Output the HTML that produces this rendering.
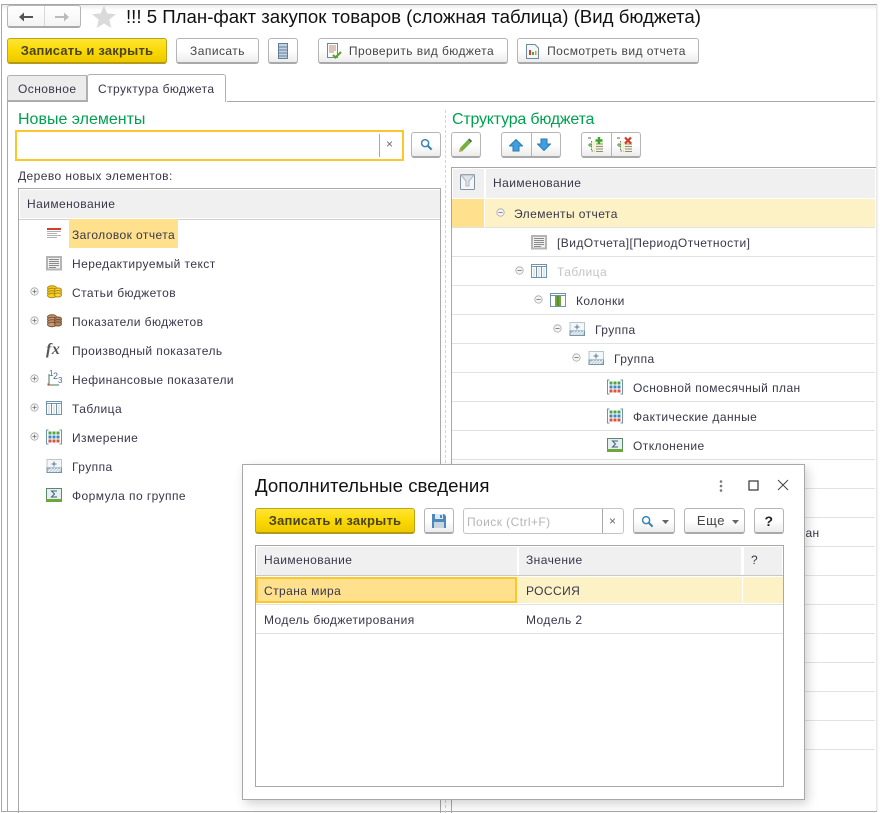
<!DOCTYPE html>
<html><head><meta charset="utf-8">
<style>
html,body{margin:0;padding:0;background:#fff}
#p{position:relative;width:880px;height:813px;overflow:hidden;background:#fff;font-family:"Liberation Sans",Arial,sans-serif;font-size:12px;color:#37374a}
#p div,#p svg{position:absolute}
.t{white-space:nowrap;line-height:16px;letter-spacing:.43px}
.b{box-sizing:border-box;border:1px solid #b5b5b5;border-bottom:2px solid #a9a9a9;border-radius:3px;background:linear-gradient(#fff,#fff 50%,#ececec);text-align:center;line-height:24px;white-space:nowrap;letter-spacing:.45px;color:#444}
.y{background:linear-gradient(#ffe534,#f9d800 55%,#efc800);border:1px solid #bda419;border-bottom:2px solid #b39a14;font-weight:bold;font-size:13px;color:#4b4420;letter-spacing:.2px}
.l{background:#e2e2e2;height:1px}
.h{background:#f0f0f0}
.v{background:#a8a8a8;width:1px}
</style></head><body><div id="p">
<svg width="0" height="0" style="position:absolute">
<defs>
<symbol id="minus" viewBox="0 0 11 11"><circle cx="5.5" cy="5.5" r="4.5" fill="#f4f4f4" stroke="#a9a9a9"/><path d="M3 5.5h5" stroke="#707070"/></symbol>
<symbol id="plus" viewBox="0 0 11 11"><circle cx="5.5" cy="5.5" r="4.5" fill="#f4f4f4" stroke="#a9a9a9"/><path d="M3 5.5h5M5.5 3v5" stroke="#707070"/></symbol>
<symbol id="text" viewBox="0 0 16 16"><rect x="1" y="2" width="14" height="12.500" fill="#efefef" stroke="#b4b4b4" stroke-width="2"/><path d="M3 4.500h10M3 6.500h10M3 8.500h10M3 10.500h10M3 12.500h7" stroke="#8a8a8a"/></symbol>
<symbol id="table" viewBox="0 0 16 16"><rect x=".5" y="1.500" width="15" height="13" fill="#fff" stroke="#6f93ad"/><path d="M.5 3.500h15M5.500 3v11M10.500 3v11" stroke="#6f93ad"/><path d="M2 5h2v9H2zM7 5h2v9H7zM12 5h2v9h-2z" fill="#dfe9f0"/></symbol>
<symbol id="cols" viewBox="0 0 16 16"><rect x=".5" y="1.500" width="15" height="13" fill="#fff" stroke="#6f93ad"/><path d="M.5 3.500h15" stroke="#6f93ad"/><rect x="5" y="4" width="6" height="10" fill="#6fa53a"/><path d="M8 4v10" stroke="#3f7a22"/></symbol>
<symbol id="group" viewBox="0 0 16 16"><rect x="1" y="1.500" width="14.500" height="13" fill="#f4f6f8" stroke="#b9c4cc"/><path d="M5.500 6h5M8 3.500v5" stroke="#4f7d9c"/><rect x="1" y="10" width="14.500" height="4.500" fill="#c6d0d8" stroke="#6f93ad"/><path d="M2 14l4-4M5 14l4-4M8 14l4-4M11 14l4-4" stroke="#fff" stroke-width=".8"/></symbol>
<symbol id="sigma" viewBox="0 0 16 16"><rect x=".5" y="1.500" width="15" height="13" fill="#e6eef2" stroke="#5b8a6a"/><rect x="0" y="12" width="16" height="3" fill="#6aa83a"/><path d="M11 4H5.500l3 3-3 3H11" fill="none" stroke="#3f5f7a"/></symbol>
<symbol id="grid" viewBox="0 0 16 16"><path d="M2.500 1H.5v14h2M13.500 1h2v14h-2" fill="none" stroke="#6f93ad"/><path d="M2.500 2.500h3v3h-3zM6.500 2.500h3v3h-3zM10.500 2.500h3v3h-3z" fill="#4fa64a"/><path d="M2.500 6.500h3v3h-3zM6.500 6.500h3v3h-3zM10.500 6.500h3v3h-3z" fill="#3f86c4"/><path d="M2.500 10.500h3v3h-3zM6.500 10.500h3v3h-3zM10.500 10.500h3v3h-3z" fill="#d9543c"/></symbol>
<symbol id="loupe" viewBox="0 0 14 14"><circle cx="5.500" cy="5.500" r="3.800" fill="#fff" stroke="#3a82b5" stroke-width="1.600"/><path d="M8.500 8.500l4 4" stroke="#3a82b5" stroke-width="2.200"/></symbol>
<symbol id="tree" viewBox="0 0 18 18"><rect x="5" y="5" width="11" height="12" fill="#f5f2dc"/><path d="M9 8h7M9 10.500h7M9 13h7M9 15.500h7" stroke="#8f8f80"/><path d="M1 2h3" stroke="#666"/><path d="M4.500 5v10h3" stroke="#6a7a6a" fill="none" stroke-dasharray="1.500 1"/><path d="M1 9h4M3 7v4" stroke="#4f9a3a"/></symbol>
</defs></svg>

<!-- window frame -->
<div style="left:1px;top:4px;width:874px;height:806px;border:1px solid #a8a8a8;box-shadow:inset 0 6px 6px -5px #ddd"></div>
<div style="left:876px;top:5px;width:3px;height:806px;background:linear-gradient(90deg,#e4e4e4,#fff)"></div>

<!-- nav -->
<div class="b" style="left:7px;top:5px;width:74px;height:23px;background:linear-gradient(#fff,#f4f4f4)"></div>
<div class="v" style="left:44px;top:6px;height:20px;background:#d8d8d8"></div>
<svg style="left:19px;top:12px" width="15" height="10" viewBox="0 0 15 10"><path d="M0 5l5-4.500V4h9v2H5v3.500z" fill="#555"/></svg>
<svg style="left:55px;top:12px" width="15" height="10" viewBox="0 0 15 10"><path d="M14 5L9 .5V4H0v2h9v3.500z" fill="#bbb"/></svg>
<svg style="left:92px;top:5px" width="24" height="23" viewBox="0 0 25 23"><path d="M12.500 0l3.400 8.300 9 .7-6.900 5.800 2.200 8.700-7.700-4.700-7.700 4.700 2.200-8.700L0 9l9-.7z" fill="#dadada"/></svg>
<div class="t" style="left:126px;top:6px;font-size:18.65px;line-height:22px;color:#111;letter-spacing:0">!!! 5 План-факт закупок товаров (сложная таблица) (Вид бюджета)</div>

<!-- toolbar -->
<div class="b y" style="left:7px;top:38px;width:160px;height:26px">Записать и закрыть</div>
<div class="b" style="left:176px;top:38px;width:83px;height:26px">Записать</div>
<div class="b" style="left:268px;top:38px;width:30px;height:26px"></div>
<svg style="left:278px;top:43px" width="10" height="16" viewBox="0 0 10 16"><rect x=".5" y=".5" width="9" height="15" fill="#c4d3e0" stroke="#5f7f9d"/><path d="M1 4h8M1 7h8M1 10h8M1 13h8" stroke="#5f7f9d"/></svg>
<div class="b" style="left:318px;top:38px;width:190px;height:26px;padding-left:17px">Проверить вид бюджета</div>
<svg style="left:326px;top:43px" width="16" height="17" viewBox="0 0 16 17"><path d="M1.500.5h10v14h-10z" fill="#fff" stroke="#6d8a9c"/><path d="M3 3h7M3 5h7M3 7h7M3 9h5" stroke="#b98a70"/><path d="M7 12l2.500 2.500L15 9" fill="none" stroke="#5aa52a" stroke-width="2.200"/></svg>
<div class="b" style="left:517px;top:38px;width:182px;height:26px;padding-left:17px">Посмотреть вид отчета</div>
<svg style="left:526px;top:44px" width="13" height="15" viewBox="0 0 13 15"><path d="M.5.500H9l3.500 3.500v10.500H.5z" fill="#f4f7fa" stroke="#6d8a9c"/><path d="M3 11V6h2v5z" fill="#d0402f"/><path d="M6 11V8h2v3z" fill="#58a52a"/><path d="M9 11V7h1.500v4z" fill="#d0a02f"/></svg>

<!-- tabs -->
<div style="left:227px;top:101px;width:648px;height:1px;background:#a8a8a8"></div>
<div style="left:7px;top:75px;width:80px;height:26px;box-sizing:border-box;background:#ececec;border:1px solid #b0b0b0;border-radius:3px 0 0 0"></div>
<div class="t" style="left:18px;top:81px">Основное</div>
<div style="left:87px;top:74px;width:139px;height:28px;box-sizing:border-box;background:#fff;border:1px solid #b0b0b0;border-bottom:0;border-radius:3px 3px 0 0"></div>
<div class="t" style="left:98px;top:81px">Структура бюджета</div>
<div style="left:7px;top:101px;width:80px;height:1px;background:#a8a8a8"></div>
<div class="v" style="left:7px;top:101px;height:710px"></div>

<!-- left panel -->
<div class="t" style="left:18px;top:110px;font-size:16px;line-height:19px;color:#00a050;letter-spacing:0">Новые элементы</div>
<div style="left:15px;top:130px;width:389px;height:31px;box-sizing:border-box;border:2px solid #fcc72c;background:#fff"></div>
<div class="v" style="left:379px;top:134px;height:23px"></div>
<div class="t" style="left:386px;top:136px;color:#666">×</div>
<div class="b" style="left:411px;top:132px;width:30px;height:26px"></div>
<svg style="left:420px;top:138px" width="13" height="13"><use href="#loupe"/></svg>
<div class="t" style="left:18px;top:168px">Дерево новых элементов:</div>

<div style="left:18px;top:188px;width:423px;height:625px;box-sizing:border-box;border:1px solid #a8a8a8;border-bottom:0"></div>
<div class="h" style="left:20px;top:190px;width:420px;height:28px"></div>
<div class="t" style="left:27px;top:196px">Наименование</div>
<div style="left:19px;top:219px;width:421px;height:1px;background:#d0d0d0"></div>

<div style="left:69px;top:219px;width:109px;height:29px;background:#ffe08c"></div>
<svg style="left:47px;top:228px" width="14" height="12" viewBox="0 0 14 12"><path d="M0 1h14" stroke="#d0402f" stroke-width="2"/><path d="M0 3.500h14M0 5.500h10M0 7.500h14M0 9.500h10" stroke="#b0b0b0"/></svg>
<div class="t" style="left:72px;top:227px">Заголовок отчета</div>
<svg style="left:46px;top:255px" width="16" height="16"><use href="#text"/></svg>
<div class="t" style="left:72px;top:256px">Нередактируемый текст</div>
<svg style="left:30px;top:287px" width="9" height="9"><use href="#plus"/></svg>
<svg style="left:47px;top:285px" width="15" height="14" viewBox="0 0 15 14"><ellipse cx="5" cy="3" rx="4.500" ry="2.200" fill="#f5cc1c" stroke="#b08a10"/><ellipse cx="5" cy="5.500" rx="4.500" ry="2.200" fill="#f5cc1c" stroke="#b08a10"/><ellipse cx="5" cy="8" rx="4.500" ry="2.200" fill="#f5cc1c" stroke="#b08a10"/><ellipse cx="5" cy="10.500" rx="4.500" ry="2.200" fill="#f5cc1c" stroke="#b08a10"/><ellipse cx="11" cy="5" rx="3.500" ry="2" fill="#f7d63a" stroke="#b08a10"/><ellipse cx="11" cy="7.500" rx="3.500" ry="2" fill="#f7d63a" stroke="#b08a10"/><ellipse cx="11" cy="10" rx="3.500" ry="2" fill="#f7d63a" stroke="#b08a10"/></svg>
<div class="t" style="left:72px;top:285px">Статьи бюджетов</div>
<svg style="left:30px;top:316px" width="9" height="9"><use href="#plus"/></svg>
<svg style="left:47px;top:314px" width="15" height="14" viewBox="0 0 15 14"><ellipse cx="5" cy="3" rx="4.500" ry="2.200" fill="#c59a78" stroke="#7a5030"/><ellipse cx="5" cy="5.500" rx="4.500" ry="2.200" fill="#c59a78" stroke="#7a5030"/><ellipse cx="5" cy="8" rx="4.500" ry="2.200" fill="#c59a78" stroke="#7a5030"/><ellipse cx="5" cy="10.500" rx="4.500" ry="2.200" fill="#c59a78" stroke="#7a5030"/><ellipse cx="11" cy="5" rx="3.500" ry="2" fill="#b08560" stroke="#7a5030"/><ellipse cx="11" cy="7.500" rx="3.500" ry="2" fill="#b08560" stroke="#7a5030"/><ellipse cx="11" cy="10" rx="3.500" ry="2" fill="#b08560" stroke="#7a5030"/></svg>
<div class="t" style="left:72px;top:314px">Показатели бюджетов</div>
<div class="t" style="left:46px;top:342px;font-family:'Liberation Serif',serif;font-style:italic;font-weight:bold;font-size:16px;letter-spacing:.5px;color:#555">fx</div>
<div class="t" style="left:72px;top:343px">Производный показатель</div>
<svg style="left:30px;top:374px" width="9" height="9"><use href="#plus"/></svg>
<svg style="left:46px;top:371px" width="17" height="16" viewBox="0 0 17 16"><path d="M3 3v11h10" fill="none" stroke="#4a7a5a"/><rect x="1.500" y="12.500" width="2" height="2" fill="#d0402f"/></svg>
<div class="t" style="left:49px;top:369px;font-size:8px;line-height:9px;letter-spacing:0;color:#4a6a8a">1</div>
<div class="t" style="left:53px;top:372px;font-size:9px;line-height:9px;letter-spacing:0;color:#4a6a8a">2</div>
<div class="t" style="left:58px;top:376px;font-size:8px;line-height:9px;letter-spacing:0;color:#4a6a8a">3</div>
<div class="t" style="left:72px;top:372px">Нефинансовые показатели</div>
<svg style="left:30px;top:403px" width="9" height="9"><use href="#plus"/></svg>
<svg style="left:46px;top:400px" width="16" height="16"><use href="#table"/></svg>
<div class="t" style="left:72px;top:401px">Таблица</div>
<svg style="left:30px;top:432px" width="9" height="9"><use href="#plus"/></svg>
<svg style="left:46px;top:429px" width="16" height="16"><use href="#grid"/></svg>
<div class="t" style="left:72px;top:430px">Измерение</div>
<svg style="left:46px;top:458px" width="16" height="16"><use href="#group"/></svg>
<div class="t" style="left:72px;top:459px">Группа</div>
<svg style="left:46px;top:487px" width="16" height="16"><use href="#sigma"/></svg>
<div class="t" style="left:72px;top:488px">Формула по группе</div>

<!-- splitter -->
<div style="left:445px;top:110px;width:0;height:703px;border-left:1px dashed #d4d4d4"></div>

<!-- right panel -->
<div class="t" style="left:452px;top:110px;font-size:16px;line-height:19px;color:#00a050;letter-spacing:-.2px">Структура бюджета</div>
<div class="b" style="left:451px;top:132px;width:30px;height:26px"></div>
<svg style="left:458px;top:138px" width="15" height="15" viewBox="0 0 15 15"><path d="M1 14l1-4 8-8.500 3 3L4.500 13z" fill="#6fb23e"/><path d="M10 1.500l3 3 1-1.500-2.500-2.500z" fill="#555"/><path d="M1 14l1-4 3 3z" fill="#d09a50"/></svg>
<div class="b" style="left:501px;top:132px;width:60px;height:26px"></div>
<div class="v" style="left:531px;top:133px;height:23px;background:#b5b5b5"></div>
<svg style="left:509px;top:139px" width="14" height="13" viewBox="0 0 14 13"><path d="M7 .5L13.500 7H10v5H4V7H.5z" fill="#3fa0e0" stroke="#2a7ab0"/></svg>
<svg style="left:537px;top:138px" width="14" height="13" viewBox="0 0 14 13"><path d="M7 12.500L13.500 6H10V1H4v5H.5z" fill="#3fa0e0" stroke="#2a7ab0"/></svg>
<div class="b" style="left:581px;top:132px;width:60px;height:26px"></div>
<div class="v" style="left:611px;top:133px;height:23px;background:#b5b5b5"></div>
<svg style="left:587px;top:136px" width="18" height="18"><use href="#tree"/><path d="M8.500 4.500h7M12 1v7" stroke="#3fa52a" stroke-width="2.500"/></svg>
<svg style="left:616px;top:136px" width="18" height="18"><use href="#tree"/><path d="M9 1.500l6 6M15 1.500l-6 6" stroke="#d03a2a" stroke-width="2.200"/></svg>

<div style="left:451px;top:167px;width:425px;height:646px;box-sizing:border-box;border:1px solid #a8a8a8;border-right:0;border-bottom:0"></div>
<div class="h" style="left:453px;top:169px;width:31px;height:29px"></div>
<div class="h" style="left:486px;top:169px;width:389px;height:29px"></div>
<svg style="left:460px;top:174px" width="15" height="16" viewBox="0 0 15 16"><rect x=".5" y=".5" width="14" height="15" rx="1" fill="#f6f6f6" stroke="#7f93a5"/><path d="M1 1h13L9 7v5H6V7z" fill="#dfe4e8" stroke="#a9b5bf"/></svg>
<div class="t" style="left:493px;top:175px">Наименование</div>

<div style="left:452px;top:199px;width:32px;height:28px;background:#ffe08c"></div>
<div style="left:485px;top:199px;width:390px;height:28px;background:#fdf1c6"></div>
<div class="l" style="left:452px;top:227px;width:423px"></div>
<div class="l" style="left:452px;top:256px;width:423px"></div>
<div class="l" style="left:452px;top:285px;width:423px"></div>
<div class="l" style="left:452px;top:314px;width:423px"></div>
<div class="l" style="left:452px;top:343px;width:423px"></div>
<div class="l" style="left:452px;top:372px;width:423px"></div>
<div class="l" style="left:452px;top:401px;width:423px"></div>
<div class="l" style="left:452px;top:430px;width:423px"></div>
<div class="l" style="left:452px;top:459px;width:423px"></div>
<div class="l" style="left:452px;top:488px;width:423px"></div>
<div class="l" style="left:452px;top:517px;width:423px"></div>
<div class="l" style="left:452px;top:546px;width:423px"></div>
<div class="l" style="left:452px;top:575px;width:423px"></div>
<div class="l" style="left:452px;top:604px;width:423px"></div>
<div class="l" style="left:452px;top:633px;width:423px"></div>
<div class="l" style="left:452px;top:662px;width:423px"></div>
<div class="l" style="left:452px;top:691px;width:423px"></div>
<div class="l" style="left:452px;top:720px;width:423px"></div>
<div class="l" style="left:452px;top:749px;width:423px"></div>

<svg style="left:496px;top:208px" width="9" height="9"><use href="#minus"/></svg>
<div class="t" style="left:514px;top:206px">Элементы отчета</div>
<svg style="left:531px;top:234px" width="16" height="16"><use href="#text"/></svg>
<div class="t" style="left:557px;top:235px">[ВидОтчета][ПериодОтчетности]</div>
<svg style="left:515px;top:266px" width="9" height="9"><use href="#minus"/></svg>
<svg style="left:531px;top:263px" width="16" height="16"><use href="#table"/></svg>
<div class="t" style="left:557px;top:264px;color:#c4c4c8">Таблица</div>
<svg style="left:534px;top:295px" width="9" height="9"><use href="#minus"/></svg>
<svg style="left:550px;top:292px" width="16" height="16"><use href="#cols"/></svg>
<div class="t" style="left:576px;top:293px">Колонки</div>
<svg style="left:553px;top:324px" width="9" height="9"><use href="#minus"/></svg>
<svg style="left:569px;top:321px" width="16" height="16"><use href="#group"/></svg>
<div class="t" style="left:595px;top:322px">Группа</div>
<svg style="left:572px;top:353px" width="9" height="9"><use href="#minus"/></svg>
<svg style="left:588px;top:350px" width="16" height="16"><use href="#group"/></svg>
<div class="t" style="left:614px;top:351px">Группа</div>
<svg style="left:607px;top:379px" width="16" height="16"><use href="#grid"/></svg>
<div class="t" style="left:633px;top:380px">Основной помесячный план</div>
<svg style="left:607px;top:408px" width="16" height="16"><use href="#grid"/></svg>
<div class="t" style="left:633px;top:409px">Фактические данные</div>
<svg style="left:607px;top:437px" width="16" height="16"><use href="#sigma"/></svg>
<div class="t" style="left:633px;top:438px">Отклонение</div>
<div class="t" style="left:652px;top:525px">Основной помесячный план</div>

<!-- dialog -->
<div style="left:242px;top:464px;width:561px;height:334px;box-sizing:content-box;background:#fff;border:1px solid #a8a8a8;box-shadow:3px 4px 10px rgba(0,0,0,.18)"></div>
<div class="t" style="left:255px;top:475px;font-size:18.65px;line-height:22px;color:#111;letter-spacing:.03px">Дополнительные сведения</div>
<svg style="left:719px;top:479px" width="4" height="14" viewBox="0 0 4 14"><circle cx="2" cy="2.500" r="1.300" fill="#777"/><circle cx="2" cy="7" r="1.300" fill="#777"/><circle cx="2" cy="11.500" r="1.300" fill="#777"/></svg>
<svg style="left:748px;top:480px" width="11" height="11" viewBox="0 0 11 11"><rect x="1" y="1" width="9" height="9" fill="none" stroke="#333" stroke-width="1.200"/></svg>
<svg style="left:777px;top:479px" width="12" height="12" viewBox="0 0 12 12"><path d="M1 1l10 10M11 1L1 11" stroke="#444" stroke-width="1"/></svg>

<div class="b y" style="left:255px;top:508px;width:160px;height:26px">Записать и закрыть</div>
<div class="b" style="left:424px;top:508px;width:30px;height:26px"></div>
<svg style="left:432px;top:514px" width="14" height="14" viewBox="0 0 14 14"><path d="M0 0h12l2 2v12H0z" fill="#4f88ba"/><rect x="3" y="0" width="8" height="5" fill="#dce8f2"/><rect x="2" y="8" width="10" height="6" fill="#c8d4de"/><rect x="8" y="1" width="2" height="3" fill="#4f88ba"/></svg>
<div style="left:463px;top:508px;width:161px;height:26px;box-sizing:border-box;border:1px solid #c4c4c4;border-radius:3px;background:#fff"></div>
<div class="v" style="left:602px;top:509px;height:24px"></div>
<div class="t" style="left:467px;top:514px;color:#b5b5b5">Поиск (Ctrl+F)</div>
<div class="t" style="left:609px;top:513px;color:#666">×</div>
<div class="b" style="left:633px;top:508px;width:42px;height:26px"></div>
<svg style="left:641px;top:515px" width="13" height="13"><use href="#loupe"/></svg>
<svg style="left:662px;top:520px" width="7" height="4"><path d="M0 0h7L3.500 4z" fill="#666"/></svg>
<div class="b" style="left:684px;top:508px;width:61px;height:26px;padding-right:7px;font-size:13px;letter-spacing:.6px">Еще</div>
<svg style="left:732px;top:520px" width="7" height="4"><path d="M0 0h7L3.500 4z" fill="#666"/></svg>
<div class="b" style="left:754px;top:508px;width:30px;height:26px;font-weight:bold;font-size:14px;color:#222">?</div>

<div style="left:255px;top:545px;width:529px;height:242px;box-sizing:border-box;border:1px solid #a8a8a8;background:#fff"></div>
<div class="h" style="left:257px;top:547px;width:260px;height:28px"></div>
<div class="h" style="left:519px;top:547px;width:222px;height:28px"></div>
<div class="h" style="left:744px;top:547px;width:38px;height:28px"></div>
<div style="left:256px;top:575px;width:527px;height:1px;background:#c8c8c8"></div>
<div class="t" style="left:264px;top:552px">Наименование</div>
<div class="t" style="left:526px;top:552px">Значение</div>
<div class="t" style="left:751px;top:552px">?</div>

<div style="left:256px;top:577px;width:527px;height:26px;background:#fdf1c6"></div>
<div style="left:742px;top:577px;width:1px;height:26px;background:#fff"></div>
<div style="left:256px;top:577px;width:261px;height:26px;box-sizing:border-box;border:2px solid #fcc72c;background:#ffe08c"></div>
<div class="t" style="left:264px;top:583px">Страна мира</div>
<div class="t" style="left:526px;top:583px">РОССИЯ</div>
<div class="l" style="left:256px;top:604px;width:527px"></div>
<div class="t" style="left:264px;top:612px">Модель бюджетирования</div>
<div class="t" style="left:526px;top:612px">Модель 2</div>
<div class="l" style="left:256px;top:633px;width:527px"></div>
</div></body></html>
